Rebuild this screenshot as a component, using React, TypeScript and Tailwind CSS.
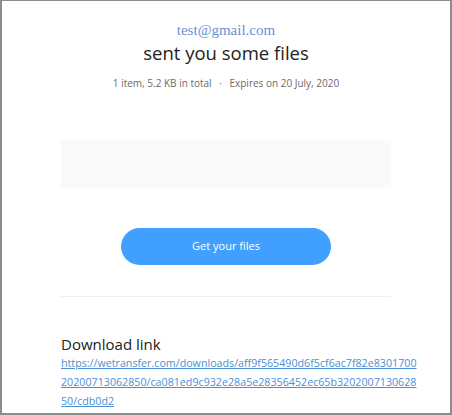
export default function App() {
  return (
    <div className="w-[452px] h-[415px] bg-white border-[#8c8c8c] border-l-2 border-r-2 border-b-2 border-t overflow-hidden" style={{ fontFamily: '"Open Sans", "Noto Sans", sans-serif' }}>
      <div className="w-[330px] mx-auto flex flex-col items-center">
        <div className="mt-[19px] text-[15px] leading-[20px] text-[#6b8fcf]" style={{ fontFamily: '"Liberation Serif", serif' }}>
          test@gmail.com
        </div>
        <h1 className="mt-0 text-[18.5px] leading-[26px] text-[#222]">sent you some files</h1>
        <p className="mt-[9px] text-[10px] leading-[16px] text-[#6a6a6a]">
          1 item, 5.2 KB in total <span className="mx-[5px]">·</span> Expires on 20 July, 2020
        </p>
        <div className="mt-[49px] w-full h-[48px] bg-[#fafafa]" />
        <button className="mt-[40px] w-[210px] h-[37px] rounded-full bg-[#409fff] text-white text-[11px]">
          Get your files
        </button>
        <div className="mt-[31px] w-full h-px bg-[#efefef]" />
        <div className="w-full mt-[37px]">
          <div className="text-[15px] leading-[20px] text-[#222]">Download link</div>
          <a href="#" className="block text-[10.7px] leading-[19px] text-[#4a8fd6] underline">
            https://wetransfer.com/downloads/aff9f565490d6f5cf6ac7f82e8301700
            <br />
            20200713062850/ca081ed9c932e28a5e28356452ec65b3202007130628
            <br />
            50/cdb0d2
          </a>
        </div>
      </div>
    </div>
  );
}
